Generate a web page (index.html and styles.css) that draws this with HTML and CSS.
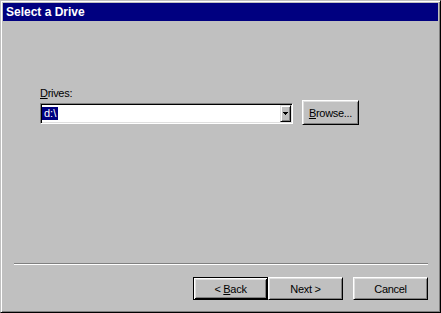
FILE: index.html
```html
<!DOCTYPE html>
<html lang="en">
<head>
    <meta charset="UTF-8">
    <title>Select a Drive</title>
    <link rel="stylesheet" href="styles.css">
</head>
<body>
    <div class="window">
        <div class="titlebar">Select a Drive</div>
        <div class="content">
            <div class="field">
                <div class="label"><u>D</u>rives:</div>
                <div class="row">
                    <div class="combo">
                        <div class="value"><span class="sel">d:\</span></div>
                        <div class="drop">
                            <svg width="5" height="3" viewBox="0 0 5 3"><path d="M0 0h5v1h-1v1h-1v1h-1v-1h-1v-1h-1z" fill="#000"/></svg>
                        </div>
                    </div>
                    <button class="btn browse"><span><u>B</u>rowse...</span></button>
                </div>
            </div>
            <div class="spacer"></div>
            <div class="sep"></div>
            <div class="actions">
                <button class="btn default"><span>&lt; <u>B</u>ack</span></button>
                <button class="btn"><span>Next &gt;</span></button>
                <button class="btn cancel"><span>Cancel</span></button>
            </div>
        </div>
    </div>
</body>
</html>
```

FILE: styles.css
```css
* {
    margin: 0;
    padding: 0;
    box-sizing: border-box;
}
body {
    background: #c0c0c0;
    font-family: "Liberation Sans", Arial, sans-serif;
    font-size: 11px;
    color: #000;
}
.window {
    width: 441px;
    height: 313px;
    display: flex;
    flex-direction: column;
    background: #c0c0c0;
    border: 1px solid;
    border-color: #c0c0c0 #000 #000 #c0c0c0;
    box-shadow: inset 1px 1px #fff, inset -1px -1px #808080;
    padding: 2px;
}
.titlebar {
    height: 18px;
    line-height: 18px;
    padding-left: 3px;
    background: #000080;
    color: #fff;
    font-weight: bold;
    font-size: 12px;
}
.content {
    flex: 1;
    display: flex;
    flex-direction: column;
    padding: 66px 10px 10px 11px;
}
.field {
    padding-left: 26px;
}
.label {
    line-height: 13px;
    letter-spacing: -0.3px;
}
.row {
    display: flex;
    align-items: flex-start;
    gap: 9px;
}
.combo {
    width: 253px;
    height: 21px;
    margin-top: 3px;
    display: flex;
    background: #fff;
    border: 1px solid;
    border-color: #808080 #fff #fff #808080;
    box-shadow: inset 1px 1px #000, inset -1px -1px #dfdfdf;
    padding: 1px;
}
.value {
    flex: 1;
    padding-top: 2px;
}
.sel {
    display: inline-block;
    line-height: 13px;
    padding: 0 2px;
    background: #000080;
    color: #fff;
}
.drop {
    width: 11px;
    height: 17px;
    display: flex;
    align-items: center;
    justify-content: center;
    background: #c0c0c0;
    border: 1px solid;
    border-color: #dfdfdf #000 #000 #dfdfdf;
    box-shadow: inset 1px 1px #fff, inset -1px -1px #808080;
}
.drop svg {
    display: block;
}
.btn {
    width: 75px;
    height: 23px;
    display: flex;
    align-items: center;
    justify-content: center;
    background: #c0c0c0;
    border: 1px solid;
    border-color: #fff #000 #000 #fff;
    box-shadow: inset 1px 1px #dfdfdf, inset -1px -1px #808080;
    font: inherit;
    letter-spacing: -0.3px;
    color: #000;
}
.btn.browse {
    width: 57px;
    height: 25px;
}
.btn.default {
    border-color: #000;
    box-shadow: inset 1px 1px #fff, inset -1px -1px #000, inset 2px 2px #dfdfdf, inset -2px -2px #808080;
}
.btn.cancel {
    margin-left: 10px;
}
.spacer {
    flex: 1;
}
.sep {
    height: 2px;
    border-top: 1px solid #808080;
    border-bottom: 1px solid #fff;
}
.actions {
    display: flex;
    justify-content: flex-end;
    margin-top: 12px;
}
```
